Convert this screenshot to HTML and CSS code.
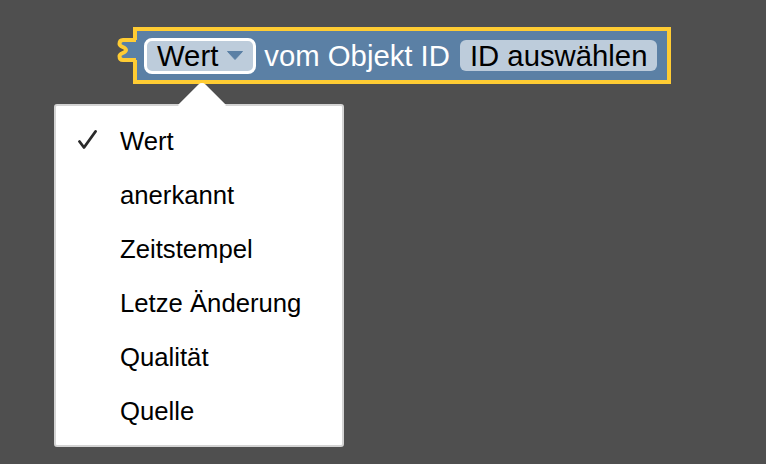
FILE: index.html
```html
<!DOCTYPE html>
<html lang="de">
<head>
<meta charset="utf-8">
<title>Blockly Block</title>
<link rel="stylesheet" href="styles.css">
</head>
<body>
<div class="workspace">
  <div class="block">
    <svg class="tab" width="26" height="32" viewBox="0 0 26 32">
      <path class="tab-fill" d="M24,6 H8 C5,6 4.5,8 4.5,10 C4.5,13 11,13 11,16 C11,19 4.5,19 4.5,22 C4.5,24 5,26 8,26 H24 Z"/>
      <path class="tab-stroke" d="M21,6 H8 C5,6 4.5,8 4.5,10 C4.5,13 11,13 11,16 C11,19 4.5,19 4.5,22 C4.5,24 5,26 8,26 H21"/>
    </svg>
    <div class="field field-open">
      <span>Wert</span>
      <svg class="arrow" width="16" height="9" viewBox="0 0 16 9"><path d="M0.5,0.5 H15.5 L8,8.5 Z"/></svg>
    </div>
    <span class="label">vom Objekt ID</span>
    <div class="field field-id">ID auswählen</div>
  </div>
  <div class="menu">
    <div class="menu-pointer"></div>
    <div class="item"><span class="check"><svg width="20" height="20" viewBox="0 0 20 20"><path d="M2.5,11.5 L7,17.5 L18.5,1.5"/></svg></span><span>Wert</span></div>
    <div class="item"><span class="check"></span><span>anerkannt</span></div>
    <div class="item"><span class="check"></span><span>Zeitstempel</span></div>
    <div class="item"><span class="check"></span><span>Letze Änderung</span></div>
    <div class="item"><span class="check"></span><span>Qualität</span></div>
    <div class="item"><span class="check"></span><span>Quelle</span></div>
  </div>
</div>
</body>
</html>
```
FILE: styles.css
```css
html, body {
  margin: 0;
  padding: 0;
}
body {
  width: 766px;
  height: 464px;
  overflow: hidden;
  background: #4f4f4f;
  font-family: "Liberation Sans", Arial, sans-serif;
}
.workspace {
  display: flex;
  flex-direction: column;
  align-items: flex-start;
  padding-top: 27px;
}
.block {
  position: relative;
  margin-left: 133px;
  box-sizing: border-box;
  height: 57px;
  display: flex;
  align-items: center;
  border: 4px solid #fc3;
  background: #5b80a5;
  padding: 0 10px 0 7px;
  font-size: 29.3px;
}
.tab {
  position: absolute;
  left: -22px;
  top: 3px;
  overflow: visible;
}
.tab-fill {
  fill: #5b80a5;
}
.tab-stroke {
  fill: none;
  stroke: #fc3;
  stroke-width: 4;
}
.field {
  box-sizing: border-box;
  display: flex;
  align-items: center;
  background: #bdccdb;
  color: #000;
  white-space: nowrap;
}
.field-open {
  height: 36px;
  border: 3px solid #fff;
  border-radius: 8px;
  padding: 0 10px;
  gap: 9px;
}
.arrow path {
  fill: #5b80a5;
  stroke: #5b80a5;
  stroke-linejoin: round;
}
.label {
  color: #fff;
  margin-left: 8px;
  white-space: nowrap;
  line-height: 31px;
}
.field-id {
  height: 31px;
  line-height: 31px;
  border-radius: 6px;
  padding: 0 10px;
  margin-left: 10px;
}
.menu {
  position: relative;
  box-sizing: border-box;
  margin-left: 54px;
  margin-top: 20px;
  width: 290px;
  height: 343px;
  background: #fff;
  border: 2px solid #d4d4d4;
  border-radius: 3px;
  padding: 8px 0 7px 0;
  font-size: 25.7px;
  color: #000;
}
.menu-pointer {
  position: absolute;
  left: 129px;
  top: -18px;
  width: 34px;
  height: 34px;
  background: #fff;
  border-top-left-radius: 5px;
  transform: rotate(45deg);
}
.item {
  position: relative;
  display: flex;
  align-items: center;
  height: 54px;
  line-height: 54px;
  white-space: nowrap;
}
.check {
  width: 64px;
  height: 54px;
  display: flex;
  align-items: center;
  justify-content: flex-start;
}
.check svg {
  margin-left: 21px;
  margin-bottom: 2px;
  filter: blur(0.5px);
}
.check path {
  fill: none;
  stroke: #2a2a2a;
  stroke-width: 2.8;
  stroke-linecap: round;
  stroke-linejoin: round;
}
```
